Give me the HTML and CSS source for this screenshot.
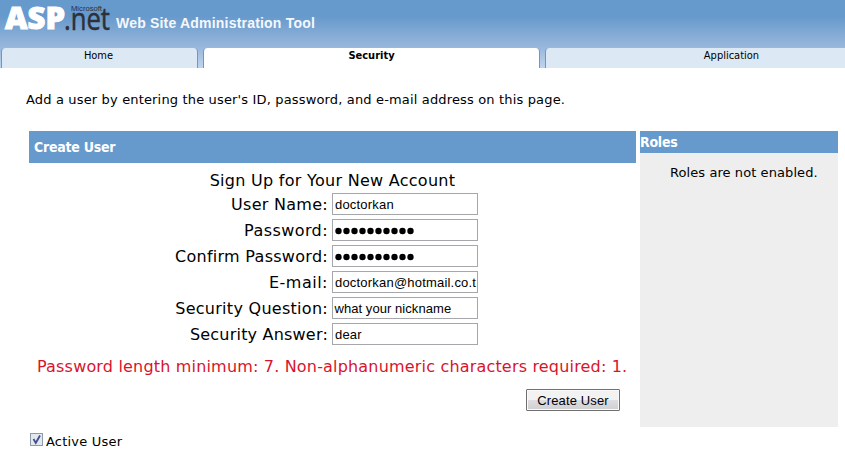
FILE: index.html
```html
<!DOCTYPE html>
<html lang="en">
<head>
<meta charset="utf-8">
<title>Web Site Administration Tool</title>
<link rel="stylesheet" href="styles.css">
</head>
<body>
<header class="banner">
  <svg class="logo" width="115" height="48" viewBox="0 0 115 48" aria-label="ASP.net">
    <text class="logo-asp" x="5" y="29" textLength="60" lengthAdjust="spacingAndGlyphs">ASP</text>
    <text class="logo-net" x="64" y="29.5" textLength="46" lengthAdjust="spacingAndGlyphs">.net</text>
    <text class="logo-ms" x="71" y="11" textLength="31" lengthAdjust="spacingAndGlyphs">Microsoft</text>
  </svg>
  <h1 class="title">Web Site Administration Tool</h1>
</header>
<nav class="tabs">
  <a class="tab tab-home">Home</a>
  <a class="tab tab-security">Security</a>
  <a class="tab tab-app">Application</a>
</nav>
<main class="content">
  <p class="intro">Add a user by entering the user's ID, password, and e-mail address on this page.</p>
  <div class="panels">
    <section class="create">
      <h2 class="create-head">Create User</h2>
      <form class="form">
        <p class="signup">Sign Up for Your New Account</p>
        <div class="row"><label class="l-user">User Name:</label><div class="field">doctorkan</div></div>
        <div class="row"><label class="l-pass">Password:</label><div class="field"><svg class="dots" width="82" height="8"><path d="M3.5 4H80"/></svg></div></div>
        <div class="row"><label class="l-conf">Confirm Password:</label><div class="field"><svg class="dots" width="82" height="8"><path d="M3.5 4H80"/></svg></div></div>
        <div class="row"><label class="l-mail">E-mail:</label><div class="field f-mail">doctorkan@hotmail.co.t</div></div>
        <div class="row"><label class="l-ques">Security Question:</label><div class="field f-ques">what your nickname</div></div>
        <div class="row"><label class="l-ans">Security Answer:</label><div class="field">dear</div></div>
        <p class="error">Password length minimum: 7. Non-alphanumeric characters required: 1.</p>
        <button class="submit" type="button">Create User</button>
      </form>
    </section>
    <aside class="roles">
      <h2 class="roles-head">Roles</h2>
      <p class="roles-text">Roles are not enabled.</p>
    </aside>
  </div>
  <div class="active">
    <svg class="check" width="13" height="13"><rect x=".5" y=".5" width="12" height="12"/><path d="M3.5 6l2.3 4L10 2.5"/></svg>
    <span>Active User</span>
  </div>
</main>
</body>
</html>
```
FILE: styles.css
```css
* { box-sizing: border-box; }
body {
  margin: 0;
  width: 845px;
  height: 450px;
  overflow: hidden;
  background: #fff;
  color: #000;
  font: 13px/16px "DejaVu Sans", sans-serif;
}
h1, h2, p { margin: 0; }

.banner {
  display: flex;
  height: 48px;
  background: linear-gradient(#6699cc 0, #6699cc 16px, #9ab8dc 48px);
}
.logo { flex: none; overflow: visible; }
.logo-asp { font: 800 30px "Open Sans", sans-serif; fill: #fff; stroke: #fff; stroke-width: 1; }
.logo-net { font: 31px "Open Sans", sans-serif; fill: #2d3038; stroke: #2d3038; stroke-width: .5; }
.logo-ms { font: 8px "Liberation Sans", sans-serif; fill: #2d3038; }
.title {
  padding: 14px 0 0 1px;
  font: bold 14px/18px "Liberation Sans", sans-serif;
  letter-spacing: .2px;
  color: #f4f8fc;
  white-space: nowrap;
}

.tabs {
  display: flex;
  gap: 5px;
  height: 20px;
  padding-left: 1px;
  background: linear-gradient(#9ab8dc, #bdd5f0);
}
.tab {
  flex: none;
  border-left: 1px solid #6699cc;
  border-right: 1px solid #6699cc;
  border-radius: 4px 4px 0 0;
  background: #dce8f3;
  font: 11px/15px "DejaVu Sans Condensed", sans-serif;
  text-align: center;
}
.tab-home { width: 197px; padding-right: 2px; }
.tab-security { width: 337px; background: #fff; font-weight: bold; }
.tab-app { flex: 1; padding-left: 72px; border-right: 0; border-radius: 4px 0 0 0; }

.intro { padding: 24px 0 0 26px; height: 63px; letter-spacing: .157px; white-space: nowrap; }

.panels { display: flex; gap: 4px; padding-left: 29px; height: 296px; }
.create { width: 607px; }
.create-head, .roles-head {
  background: #6699cc;
  color: #fff;
  font: bold 14px/22px "DejaVu Sans Condensed", sans-serif;
  letter-spacing: -.25px;
}
.create-head { height: 32px; padding-left: 5px; line-height: 32px; }
.form { font-size: 16px; letter-spacing: .28px; white-space: nowrap; }
.signup { height: 30px; line-height: 36px; text-align: center; }
.row { display: flex; gap: 4px; height: 26px; }
.row label { width: 299px; text-align: right; line-height: 24px; }
.row .l-pass { letter-spacing: .42px; }
.row .l-mail { letter-spacing: .5px; }
.row .l-ans { letter-spacing: .2px; }
.field {
  width: 146px;
  height: 22px;
  padding-left: 2px;
  border: 1px solid #a5a7ab;
  overflow: hidden;
  font: 13px/21px "Liberation Sans", sans-serif;
  letter-spacing: .2px;
}
.f-ques { letter-spacing: .06px; padding-left: 1.5px; }
.dots { display: block; margin-top: 7px; }
.dots path { stroke: #000; stroke-width: 6.4; stroke-linecap: round; stroke-dasharray: 0 8; }
.error { height: 40px; padding: 8px 0 0 8px; line-height: 20px; letter-spacing: .18px; color: #d8142c; }
.submit {
  display: block;
  width: 94px;
  height: 22px;
  margin: 0 0 0 497px;
  padding: 0;
  border: 1px solid #707070;
  border-radius: 1px;
  background: linear-gradient(#f2f2f2 50%, #dedee2 50%, #cfcfd2);
  box-shadow: inset 0 0 0 1px #fafafa;
  color: #000;
  font: 13px/19px "Liberation Sans", sans-serif;
  letter-spacing: .15px;
}
.roles { width: 198px; background: #eee; }
.roles-head { height: 22px; }
.roles-text { padding: 12px 0 0 30px; letter-spacing: .08px; white-space: nowrap; }

.active { display: flex; padding: 6px 0 0 30px; gap: 3px; }
.active span { padding-top: 1px; letter-spacing: .2px; }
.check rect { fill: #e3e8ef; stroke: #8e9aac; }
.check path { fill: none; stroke: #3f4d8c; stroke-width: 1.8; }
```
